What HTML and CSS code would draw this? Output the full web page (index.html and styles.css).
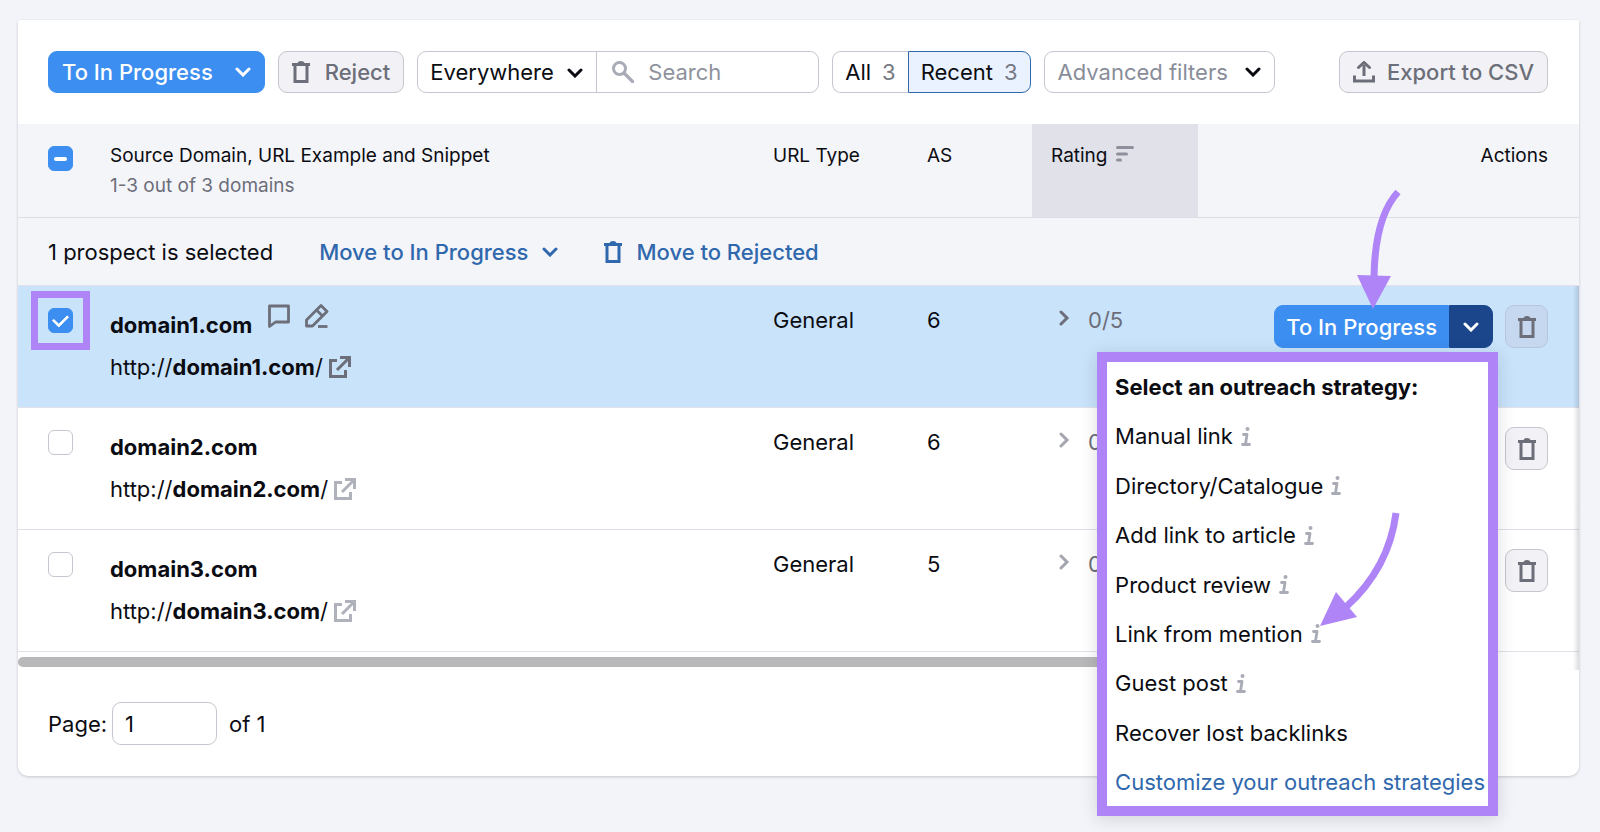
FILE: index.html
```html
<!DOCTYPE html>
<html lang="en">

<head>
    <meta charset="UTF-8">
    <meta name="viewport" content="width=device-width, initial-scale=1">
    <title>Prospects</title>
    <link rel="stylesheet" href="styles.css">
</head>

<body>
    <svg class="sprite" aria-hidden="true">
        <symbol id="chevron" viewBox="0 0 16 10">
            <path d="M2 2l6 6 6-6" fill="none" stroke="currentColor" stroke-width="3" stroke-linecap="round" />
        </symbol>
        <symbol id="chevron-right" viewBox="0 0 11 18">
            <path d="M2 3l6 6-6 6" fill="none" stroke="currentColor" stroke-width="3" stroke-linecap="round" />
        </symbol>
        <symbol id="trash" viewBox="0 0 18 22">
            <path d="M0 2h5.500q.5-2 3.500-2t3.500 2H18v3h-1.500v17h-15V5H0zM4.500 5v14h9V5z" fill="currentColor" fill-rule="evenodd" />
        </symbol>
        <symbol id="external" viewBox="0 0 22 22">
            <path d="M8 4.500H1.500v16h15V14M8 14L19 3" fill="none" stroke="currentColor" stroke-width="3" />
            <path d="M11 0h11v11h-3V5l-2-2h-6z" fill="currentColor" />
        </symbol>
        <symbol id="info" viewBox="0 0 10 19">
            <circle cx="6.500" cy="2" r="2" fill="currentColor" />
            <path d="M2.500 7.500h3.500L4.500 17M1.500 17.500h7" fill="none" stroke="currentColor" stroke-width="2.800" stroke-linecap="round" stroke-linejoin="round" />
        </symbol>
    </svg>

    <main class="card">
        <div class="toolbar">
            <button class="btn btn-primary">To In Progress <svg class="chevron"><use href="#chevron" /></svg></button>
            <button class="btn btn-grey"><svg class="trash"><use href="#trash" /></svg> Reject</button>
            <div class="search">
                <div class="select-wrap">
                    <select class="select" aria-label="Search in">
                        <option>Everywhere</option>
                    </select>
                    <svg class="chevron"><use href="#chevron" /></svg>
                </div>
                <label class="search-field">
                    <svg class="search-icon" viewBox="0 0 22 22">
                        <circle cx="7.500" cy="7.500" r="6" fill="none" stroke="currentColor" stroke-width="3" />
                        <path d="M12 12l8.500 8.500" stroke="currentColor" stroke-width="3.200" stroke-linecap="round" />
                    </svg>
                    <input class="search-input" type="text" placeholder="Search" aria-label="Search">
                </label>
            </div>
            <div class="pills">
                <button class="pill">All <span class="count">3</span></button>
                <button class="pill pill-active">Recent <span class="count">3</span></button>
            </div>
            <button class="btn btn-filter">Advanced filters <svg class="chevron"><use href="#chevron" /></svg></button>
            <button class="btn btn-grey btn-export">
                <svg class="export-icon" viewBox="0 0 22 22">
                    <path d="M1.500 14.500v5.500h19v-5.500M11 15V4" fill="none" stroke="currentColor" stroke-width="3" />
                    <path d="M5.500 6.500L11 1.500l5.500 5" fill="none" stroke="currentColor" stroke-width="3" stroke-linecap="round" />
                </svg>
                Export to CSV
            </button>
        </div>

        <div class="table-wrap">
            <table class="table">
                <colgroup>
                    <col class="col-check">
                    <col>
                    <col class="col-type">
                    <col class="col-as">
                    <col class="col-rating">
                    <col class="col-actions">
                </colgroup>
                <thead>
                    <tr>
                        <th class="cell-check"><input class="checkbox" id="check-all" type="checkbox" aria-label="Select all"></th>
                        <th>Source Domain, URL Example and Snippet<br><span class="muted">1-3 out of 3 domains</span></th>
                        <th>URL Type</th>
                        <th>AS</th>
                        <th class="sorted">Rating
                            <svg class="sort-icon" viewBox="0 0 18 16">
                                <path d="M1.500 1.500h15M1.500 8h9M1.500 14h3" stroke="currentColor" stroke-width="3" stroke-linecap="round" />
                            </svg>
                        </th>
                        <th class="cell-actions">Actions</th>
                    </tr>
                </thead>
                <tbody>
                    <tr>
                        <td class="bulk" colspan="6">
                            <div class="bulk-bar">
                                <span>1 prospect is selected</span>
                                <button class="btn-link">Move to In Progress <svg class="chevron"><use href="#chevron" /></svg></button>
                                <button class="btn-link"><svg class="trash"><use href="#trash" /></svg> Move to Rejected</button>
                            </div>
                        </td>
                    </tr>
                    <tr class="row selected">
                        <td class="cell-check"><span class="mark"><input class="checkbox" type="checkbox" checked aria-label="Select domain1.com"></span></td>
                        <td class="cell-source">
                            <div class="domain">
                                <b>domain1.com</b>
                                <span class="tools">
                                    <svg class="tool" viewBox="0 0 24 24">
                                        <path d="M2.500 2h19v16h-13l-6 4.500z" fill="none" stroke="currentColor" stroke-width="2.800" stroke-linejoin="round" />
                                    </svg>
                                    <svg class="tool" viewBox="0 0 24 24">
                                        <path d="M1.500 22v-6L16 1.500l6 6L7.500 22zM11.500 6l6 6" fill="none" stroke="currentColor" stroke-width="2.800" stroke-linejoin="round" />
                                        <path d="M13 22.500h9.500" stroke="currentColor" stroke-width="2.800" />
                                    </svg>
                                </span>
                            </div>
                            <div class="url">http://<b>domain1.com</b>/ <svg class="external"><use href="#external" /></svg></div>
                        </td>
                        <td>General</td>
                        <td>6</td>
                        <td class="cell-rating"><svg class="expand"><use href="#chevron-right" /></svg>0/5</td>
                        <td class="cell-actions">
                            <div class="actions">
                                <div class="split">
                                    <button class="btn btn-primary split-main">To In Progress</button>
                                    <button class="btn split-toggle" aria-label="Choose strategy"><svg class="chevron"><use href="#chevron" /></svg></button>
                                    <div class="menu">
                                        <div class="menu-title">Select an outreach strategy:</div>
                                        <div class="menu-item">Manual link <svg class="info"><use href="#info" /></svg></div>
                                        <div class="menu-item">Directory/Catalogue <svg class="info"><use href="#info" /></svg></div>
                                        <div class="menu-item">Add link to article <svg class="info"><use href="#info" /></svg></div>
                                        <div class="menu-item">Product review <svg class="info"><use href="#info" /></svg></div>
                                        <div class="menu-item">Link from mention <svg class="info"><use href="#info" /></svg></div>
                                        <div class="menu-item">Guest post <svg class="info"><use href="#info" /></svg></div>
                                        <div class="menu-item">Recover lost backlinks</div>
                                        <a class="menu-link" href="#">Customize your outreach strategies</a>
                                        <svg class="arrow arrow-mention" viewBox="0 0 80 120">
                                            <path d="M76 3Q69 58 26 97" fill="none" stroke="currentColor" stroke-width="7" />
                                            <path d="M0 116L16 82l21 25z" fill="currentColor" />
                                        </svg>
                                    </div>
                                    <svg class="arrow arrow-button" viewBox="0 0 44 120">
                                        <path d="M41 3Q18 28 17 88" fill="none" stroke="currentColor" stroke-width="7" />
                                        <path d="M0 86l34 1-18 33z" fill="currentColor" />
                                    </svg>
                                </div>
                                <button class="btn btn-grey btn-icon" aria-label="Reject"><svg class="trash"><use href="#trash" /></svg></button>
                            </div>
                        </td>
                    </tr>
                    <tr class="row">
                        <td class="cell-check"><input class="checkbox" type="checkbox" aria-label="Select domain2.com"></td>
                        <td class="cell-source">
                            <div class="domain"><b>domain2.com</b></div>
                            <div class="url">http://<b>domain2.com</b>/ <svg class="external"><use href="#external" /></svg></div>
                        </td>
                        <td>General</td>
                        <td>6</td>
                        <td class="cell-rating"><svg class="expand"><use href="#chevron-right" /></svg>0/5</td>
                        <td class="cell-actions">
                            <div class="actions"><button class="btn btn-grey btn-icon" aria-label="Reject"><svg class="trash"><use href="#trash" /></svg></button></div>
                        </td>
                    </tr>
                    <tr class="row">
                        <td class="cell-check"><input class="checkbox" type="checkbox" aria-label="Select domain3.com"></td>
                        <td class="cell-source">
                            <div class="domain"><b>domain3.com</b></div>
                            <div class="url">http://<b>domain3.com</b>/ <svg class="external"><use href="#external" /></svg></div>
                        </td>
                        <td>General</td>
                        <td>5</td>
                        <td class="cell-rating"><svg class="expand"><use href="#chevron-right" /></svg>0/5</td>
                        <td class="cell-actions">
                            <div class="actions"><button class="btn btn-grey btn-icon" aria-label="Reject"><svg class="trash"><use href="#trash" /></svg></button></div>
                        </td>
                    </tr>
                </tbody>
            </table>
            <div class="scrollbar"></div>
            <div class="edge-shadow"></div>
        </div>

        <div class="pager">
            <label for="page">Page:</label>
            <input class="page-input" id="page" type="text" value="1">
            <span>of 1</span>
        </div>
    </main>

    <script>
        document.getElementById('check-all').indeterminate = true;
    </script>
</body>

</html>
```

FILE: styles.css
```css
* {
    box-sizing: border-box;
}

body {
    min-height: 100vh;
    margin: 0;
    padding: 20px 21px 20px 18px;
    background: #f3f4f9;
    color: #0b0c12;
    font-family: Inter, "Liberation Sans", sans-serif;
    font-size: 22px;
    line-height: 28px;
}

button,
input,
select {
    font: inherit;
    color: inherit;
    margin: 0;
}

button {
    cursor: pointer;
}

svg {
    flex: none;
}

b {
    font-weight: 700;
}

.sprite {
    display: none;
}

.card {
    background: #fff;
    border-radius: 2px 2px 10px 10px;
    box-shadow: 0 1px 3px rgba(25, 27, 35, .2);
}

/* toolbar */
.toolbar {
    display: flex;
    gap: 13px;
    padding: 31px 31px 31px 30px;
}

.btn {
    display: flex;
    align-items: center;
    height: 42px;
    padding: 0 13px;
    border: 1px solid #c4c7cf;
    border-radius: 9px;
    background: #fff;
    white-space: nowrap;
}

.btn-primary {
    gap: 22px;
    border-color: #3c8ef0;
    background: #3c8ef0;
    color: #fff;
    font-weight: 500;
}

.btn-grey {
    gap: 15px;
    background: #f2f2f6;
    color: #6c6e79;
    font-weight: 500;
}

.btn-filter {
    gap: 17px;
    color: #898d9a;
}

.btn-filter .chevron {
    color: #0b0c12;
}

.btn-export {
    gap: 12px;
    margin-left: auto;
}

.chevron {
    width: 16px;
    height: 10px;
}

.trash {
    width: 18px;
    height: 22px;
}

.export-icon,
.search-icon {
    width: 22px;
    height: 22px;
}

.search {
    display: flex;
    width: 402px;
    height: 42px;
    border: 1px solid #c4c7cf;
    border-radius: 9px;
}

.select-wrap {
    position: relative;
    width: 179px;
    border-right: 1px solid #c4c7cf;
}

.select-wrap .chevron {
    position: absolute;
    top: 16px;
    right: 13px;
    pointer-events: none;
}

.select {
    appearance: none;
    width: 100%;
    height: 40px;
    padding: 0 12px;
    border: 0;
    background: none;
}

.search-field {
    display: flex;
    flex: 1;
    align-items: center;
    gap: 14px;
    padding: 0 15px;
    color: #a9abb6;
}

.search-input {
    width: 100%;
    min-width: 0;
    padding: 0;
    border: 0;
    background: none;
    color: #0b0c12;
}

.search-input::placeholder {
    color: #8f929d;
}

.pills {
    display: flex;
}

.pill {
    display: flex;
    align-items: center;
    gap: 11px;
    height: 42px;
    padding: 0 12px;
    border: 1px solid #c4c7cf;
    border-right: 0;
    border-radius: 9px 0 0 9px;
    background: #fff;
}

.pill-active {
    border: 1px solid #2f68ad;
    border-radius: 0 9px 9px 0;
    background: #e9f2fe;
}

.count {
    color: #777983;
}

/* table */
.table-wrap {
    position: relative;
}

.table {
    width: 100%;
    table-layout: fixed;
    border-collapse: separate;
    border-spacing: 0;
}

.col-check {
    width: 92px;
}

.col-type {
    width: 154px;
}

.col-as {
    width: 105px;
}

.col-rating {
    width: 166px;
}

.col-actions {
    width: 381px;
}

.table th {
    padding: 17px 0 16px;
    border-bottom: 1px solid #dcdde5;
    background: #f4f5f9;
    font-size: 19px;
    font-weight: 400;
    line-height: 30px;
    text-align: left;
    vertical-align: top;
}

.table td {
    padding: 20px 0 0;
    border-bottom: 1px solid #e0e1e9;
    vertical-align: top;
}

.muted {
    color: #6c6e79;
}

.table .sorted {
    padding-left: 19px;
    background: #e0e1e9;
}

.sort-icon {
    width: 18px;
    height: 16px;
    margin-left: 3px;
    color: #8e909b;
}

.table .cell-check {
    padding: 22px 0 0 30px;
    line-height: 0;
}

.table .cell-actions {
    padding-right: 31px;
    text-align: right;
}

.checkbox {
    appearance: none;
    display: grid;
    place-items: center;
    width: 25px;
    height: 25px;
    border: 1px solid #c4c7cf;
    border-radius: 6px;
    background: #fff;
}

.checkbox:checked,
.checkbox:indeterminate {
    border-color: #3c8ef0;
    background: #3c8ef0;
}

.checkbox:indeterminate::after {
    content: "";
    width: 13px;
    height: 4px;
    border-radius: 2px;
    background: #fff;
}

.checkbox:checked::after {
    content: "";
    width: 12px;
    height: 7px;
    margin-bottom: 4px;
    border: solid #fff;
    border-width: 0 0 3px 3px;
    border-radius: 1px;
    transform: rotate(-45deg);
}

/* frame around the ticked box */
.mark {
    display: block;
    position: relative;
    width: 25px;
}

.mark::before {
    content: "";
    position: absolute;
    inset: -17px;
    border: 7px solid #ae84f6;
    pointer-events: none;
}

.table .bulk {
    padding: 0;
    background: #f4f5f9;
}

.bulk-bar {
    display: flex;
    align-items: center;
    gap: 46px;
    height: 67px;
    padding: 0 30px;
}

.btn-link {
    display: flex;
    align-items: center;
    gap: 14px;
    padding: 0;
    border: 0;
    background: none;
    color: #2f68ad;
    font-weight: 500;
}

.selected td {
    background: #c9e3fb;
}

.table .cell-source {
    padding: 18px 0 19px;
    line-height: 42px;
}

.domain {
    display: flex;
    height: 42px;
}

.tools {
    display: flex;
    gap: 14px;
    margin-left: 15px;
    color: #6c6e79;
}

.tool {
    width: 24px;
    height: 24px;
}

.url {
    display: flex;
    align-items: center;
    height: 42px;
}

.external {
    width: 22px;
    height: 22px;
    margin-left: 6px;
    color: #b0b2bb;
}

.table .cell-rating {
    padding-left: 27px;
    color: #6c6e79;
}

.expand {
    width: 11px;
    height: 18px;
    margin-right: 18px;
    vertical-align: 1px;
    color: #a3a5af;
}

.selected .external,
.selected .expand {
    color: #6c6e79;
}

.row .cell-actions {
    padding-top: 19px;
}

.actions {
    display: flex;
    justify-content: flex-end;
    gap: 12px;
}

.actions .btn {
    height: 43px;
}

.btn-icon {
    justify-content: center;
    width: 43px;
    padding: 0;
}

.selected .btn-icon {
    border-color: #b9c6da;
    background: #c5d8ef;
}

.split {
    display: flex;
    position: relative;
}

.split-main {
    padding: 0 11px;
    border-radius: 9px 0 0 9px;
}

.split-toggle {
    border-color: #1b468c;
    border-radius: 0 9px 9px 0;
    background: #1b468c;
    color: #fff;
}

/* strategy menu */
.menu {
    display: flex;
    flex-direction: column;
    justify-content: space-between;
    position: absolute;
    z-index: 2;
    top: 47px;
    right: -5px;
    height: 464px;
    padding: 11px 3px 10px 8px;
    border: 10px solid #ae84f6;
    background: #fff;
    box-shadow: 0 3px 16px rgba(25, 27, 35, .15);
    text-align: left;
    white-space: nowrap;
}

.menu-title {
    font-weight: 700;
}

.menu-item {
    display: flex;
    align-items: center;
    gap: 8px;
}

.menu-link {
    color: #2f68ad;
    text-decoration: none;
}

.info {
    width: 10px;
    height: 19px;
    color: #a9abb6;
}

.arrow {
    position: absolute;
    color: #ae84f6;
    pointer-events: none;
}

.arrow-button {
    z-index: 3;
    top: -116px;
    right: 92px;
    width: 44px;
    height: 120px;
}

.arrow-mention {
    top: 148px;
    right: 88px;
    width: 80px;
    height: 120px;
}

.scrollbar {
    width: 75%;
    height: 10px;
    margin-top: 5px;
    border-radius: 5px;
    background: #b8b8ba;
}

.edge-shadow {
    position: absolute;
    top: 162px;
    right: 0;
    bottom: -3px;
    width: 6px;
    background: linear-gradient(to left, rgba(25, 27, 35, .15), rgba(25, 27, 35, 0));
}

.pager {
    display: flex;
    align-items: center;
    gap: 5px;
    padding: 35px 31px 31px 30px;
}

.page-input {
    width: 105px;
    height: 43px;
    margin-right: 7px;
    padding: 0 12px;
    border: 1px solid #c4c7cf;
    border-radius: 9px;
    background: #fff;
}
```
